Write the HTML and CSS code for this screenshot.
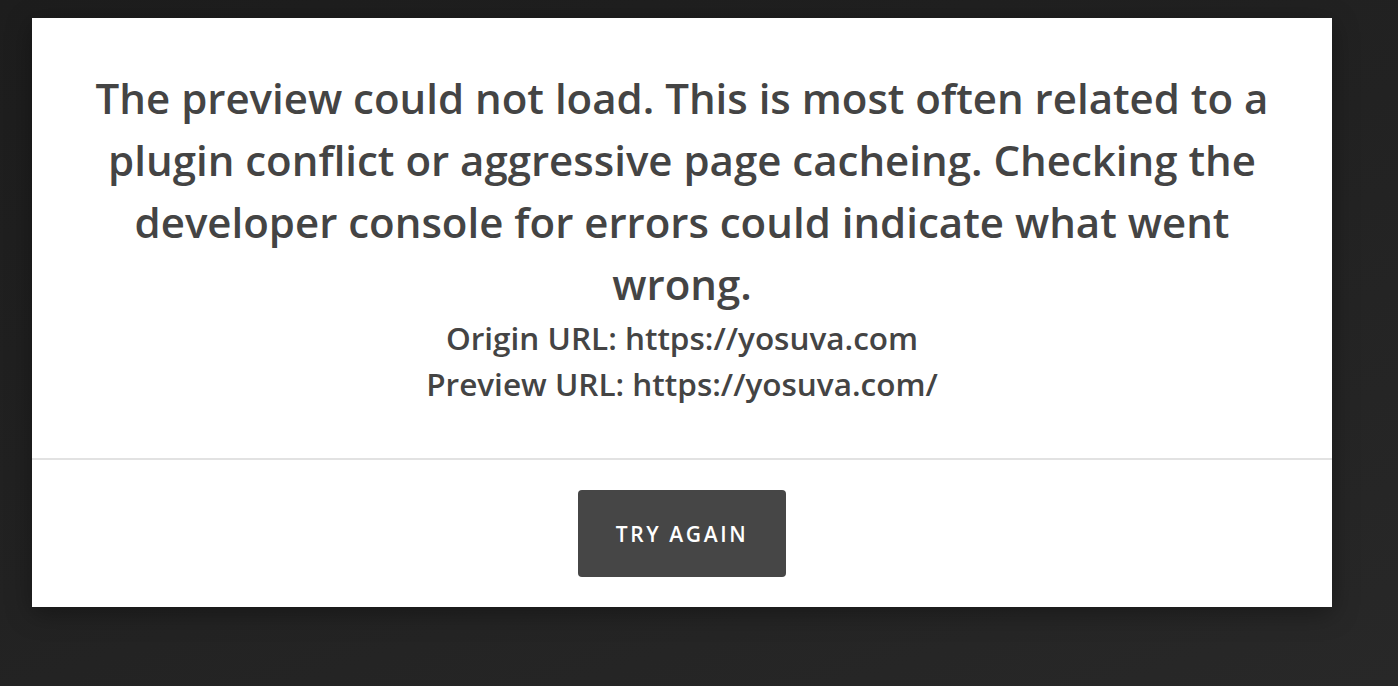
FILE: index.html
```html
<!DOCTYPE html>
<html lang="en">
<head>
    <meta charset="UTF-8">
    <meta name="viewport" content="width=device-width, initial-scale=1.0">
    <title>Preview error</title>
    <link rel="stylesheet" href="styles.css">
</head>
<body>
    <div class="modal">
        <div class="modal-body">
            <h2 class="message">The preview could not load. This is most often related to a plugin conflict or aggressive page cacheing. Checking the developer console for errors could indicate what went wrong.</h2>
            <p class="url-line">Origin URL: https://yosuva.com</p>
            <p class="url-line">Preview URL: https://yosuva.com/</p>
        </div>
        <div class="modal-footer">
            <button class="btn-retry" type="button">Try again</button>
        </div>
    </div>
</body>
</html>
```

FILE: styles.css
```css
* {
    margin: 0;
    padding: 0;
    box-sizing: border-box;
}

body {
    font-family: 'Open Sans', 'Noto Sans', sans-serif;
    background: linear-gradient(160deg, #1d1d1d 0%, #222 50%, #282828 100%);
    min-height: 100vh;
    padding: 18px 66px 0 32px;
    color: #444;
}

.modal {
    width: 1300px;
    background: #fff;
    box-shadow: 0 6px 24px rgba(0, 0, 0, 0.35);
}

.modal-body {
    padding: 49px 60px 51px;
    text-align: center;
    border-bottom: 2px solid #e2e2e2;
}

.message {
    font-size: 42px;
    font-weight: 600;
    line-height: 62px;
}

.url-line {
    font-size: 31.5px;
    font-weight: 600;
    line-height: 46px;
}

.modal-footer {
    display: flex;
    justify-content: center;
    padding: 30px 0 30px;
}

.btn-retry {
    width: 208px;
    height: 87px;
    background: #464646;
    color: #fff;
    border: none;
    border-radius: 4px;
    font-family: 'Open Sans', 'Noto Sans', sans-serif;
    font-size: 21px;
    font-weight: 600;
    letter-spacing: 2.6px;
    text-transform: uppercase;
    cursor: pointer;
}
```
